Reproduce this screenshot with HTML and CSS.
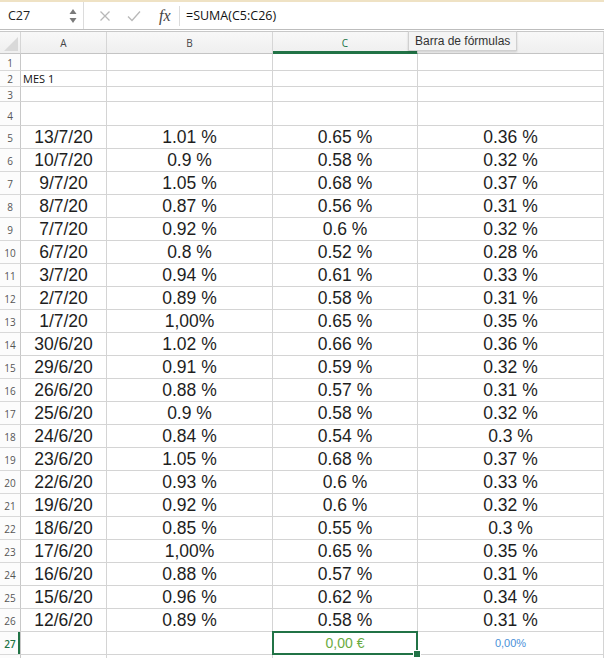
FILE: index.html
```html
<!DOCTYPE html>
<html lang="es">
<head>
<meta charset="utf-8">
<title>Hoja</title>
<link rel="stylesheet" href="styles.css">
</head>
<body>
<div class="app">
  <div class="topline"></div>
  <div class="fbar">
    <div class="namebox">
      <span class="ref">C27</span>
      <svg class="spin" width="8" height="16" viewBox="0 0 8 16"><path d="M4 1 L7.5 6 L0.5 6 Z" fill="#7a7a7a"/><path d="M4 15 L7.5 10 L0.5 10 Z" fill="#7a7a7a"/></svg>
    </div>
    <div class="sep"></div>
    <div class="btns">
      <svg class="ico" width="12" height="12" viewBox="0 0 12 12"><path d="M1.5 1.5 L10.5 10.5 M10.5 1.5 L1.5 10.5" stroke="#b8b8b8" stroke-width="1.3" fill="none"/></svg>
      <svg class="ico" width="14" height="12" viewBox="0 0 14 12"><path d="M1 6.5 L5 10.5 L13 1.5" stroke="#b8b8b8" stroke-width="1.3" fill="none"/></svg>
      <span class="fx">fx</span>
    </div>
    <div class="sep short"></div>
    <div class="formula">=SUMA(C5:C26)</div>
  </div>
  <div class="sheet">
    <div class="corner"></div><div class="ch">A</div><div class="ch">B</div><div class="ch active">C</div><div class="ch"></div>
    <div class="rh">1</div><div class="c"></div><div class="c"></div><div class="c"></div><div class="c"></div>
    <div class="rh">2</div><div class="c small">MES 1</div><div class="c"></div><div class="c"></div><div class="c"></div>
    <div class="rh">3</div><div class="c"></div><div class="c"></div><div class="c"></div><div class="c"></div>
    <div class="rh low">4</div><div class="c"></div><div class="c"></div><div class="c"></div><div class="c"></div>
    <div class="rh">5</div><div class="c n">13/7/20</div><div class="c n">1.01 %</div><div class="c n">0.65 %</div><div class="c n">0.36 %</div>
    <div class="rh">6</div><div class="c n">10/7/20</div><div class="c n">0.9 %</div><div class="c n">0.58 %</div><div class="c n">0.32 %</div>
    <div class="rh">7</div><div class="c n">9/7/20</div><div class="c n">1.05 %</div><div class="c n">0.68 %</div><div class="c n">0.37 %</div>
    <div class="rh">8</div><div class="c n">8/7/20</div><div class="c n">0.87 %</div><div class="c n">0.56 %</div><div class="c n">0.31 %</div>
    <div class="rh">9</div><div class="c n">7/7/20</div><div class="c n">0.92 %</div><div class="c n">0.6 %</div><div class="c n">0.32 %</div>
    <div class="rh">10</div><div class="c n">6/7/20</div><div class="c n">0.8 %</div><div class="c n">0.52 %</div><div class="c n">0.28 %</div>
    <div class="rh">11</div><div class="c n">3/7/20</div><div class="c n">0.94 %</div><div class="c n">0.61 %</div><div class="c n">0.33 %</div>
    <div class="rh">12</div><div class="c n">2/7/20</div><div class="c n">0.89 %</div><div class="c n">0.58 %</div><div class="c n">0.31 %</div>
    <div class="rh">13</div><div class="c n">1/7/20</div><div class="c n">1,00%</div><div class="c n">0.65 %</div><div class="c n">0.35 %</div>
    <div class="rh">14</div><div class="c n">30/6/20</div><div class="c n">1.02 %</div><div class="c n">0.66 %</div><div class="c n">0.36 %</div>
    <div class="rh">15</div><div class="c n">29/6/20</div><div class="c n">0.91 %</div><div class="c n">0.59 %</div><div class="c n">0.32 %</div>
    <div class="rh">16</div><div class="c n">26/6/20</div><div class="c n">0.88 %</div><div class="c n">0.57 %</div><div class="c n">0.31 %</div>
    <div class="rh">17</div><div class="c n">25/6/20</div><div class="c n">0.9 %</div><div class="c n">0.58 %</div><div class="c n">0.32 %</div>
    <div class="rh">18</div><div class="c n">24/6/20</div><div class="c n">0.84 %</div><div class="c n">0.54 %</div><div class="c n">0.3 %</div>
    <div class="rh">19</div><div class="c n">23/6/20</div><div class="c n">1.05 %</div><div class="c n">0.68 %</div><div class="c n">0.37 %</div>
    <div class="rh">20</div><div class="c n">22/6/20</div><div class="c n">0.93 %</div><div class="c n">0.6 %</div><div class="c n">0.33 %</div>
    <div class="rh">21</div><div class="c n">19/6/20</div><div class="c n">0.92 %</div><div class="c n">0.6 %</div><div class="c n">0.32 %</div>
    <div class="rh">22</div><div class="c n">18/6/20</div><div class="c n">0.85 %</div><div class="c n">0.55 %</div><div class="c n">0.3 %</div>
    <div class="rh">23</div><div class="c n">17/6/20</div><div class="c n">1,00%</div><div class="c n">0.65 %</div><div class="c n">0.35 %</div>
    <div class="rh">24</div><div class="c n">16/6/20</div><div class="c n">0.88 %</div><div class="c n">0.57 %</div><div class="c n">0.31 %</div>
    <div class="rh">25</div><div class="c n">15/6/20</div><div class="c n">0.96 %</div><div class="c n">0.62 %</div><div class="c n">0.34 %</div>
    <div class="rh">26</div><div class="c n">12/6/20</div><div class="c n">0.89 %</div><div class="c n">0.58 %</div><div class="c n">0.31 %</div>
    <div class="rh active">27</div><div class="c"></div><div class="c"></div><div class="c sel eur">0,00 €</div><div class="c pct">0,00%</div>
    <div class="rh"></div><div class="c"></div><div class="c"></div><div class="c"></div><div class="c"></div>
  </div>
  <div class="tooltip">Barra de fórmulas</div>
</div>
</body>
</html>
```

FILE: styles.css
```css
* { box-sizing: border-box; }
html, body { margin: 0; padding: 0; background: #fff; }
body { width: 604px; height: 658px; overflow: hidden; }

.app { position: relative; width: 604px; height: 658px; overflow: hidden; background: #fff; }

.topline { height: 2px; background: #efe2c4; }

.fbar {
  height: 28px;
  display: flex;
  align-items: center;
  border-bottom: 1px solid #bdbdbd;
  font-family: "Open Sans", "Liberation Sans", sans-serif;
}
.namebox {
  width: 83px;
  display: flex;
  align-items: center;
  justify-content: space-between;
  padding: 0 6px 0 8px;
}
.ref { font-size: 12.5px; color: #222; }
.spin { display: block; }
.sep { width: 1px; height: 27px; background: #dcdcdc; }
.sep.short { height: 20px; }
.btns {
  width: 95px;
  display: flex;
  align-items: center;
  padding-left: 15px;
  gap: 16px;
}
.ico { display: block; }
.fx {
  font-family: "Liberation Serif", serif;
  font-style: italic;
  font-size: 16px;
  color: #444;
  margin-left: 2px;
}
.formula { padding-left: 6px; font-size: 12.5px; color: #111; }

.sheet {
  margin-top: 1px;
  border-top: 1px solid #c8c8c8;
  display: grid;
  grid-template-columns: 21px 86px 166px 145px 186px;
  grid-template-rows: 22px 17px 16px 15px 24px repeat(23, 23px) 20px;
}
.corner, .ch {
  background: linear-gradient(#f8f8f8, #efefef);
  border-right: 1px solid #d6d6d6;
  border-bottom: 1px solid #c4c4c4;
}
.corner { position: relative; }
.corner::after {
  content: "";
  position: absolute;
  right: 2px; bottom: 2px;
  width: 0; height: 0;
  border-left: 14px solid transparent;
  border-bottom: 14px solid #d9d9d9;
}
.ch {
  display: flex; align-items: center; justify-content: center;
  font-family: "Open Sans", "Liberation Sans", sans-serif;
  font-size: 10px; color: #444;
}
.ch.active { color: #217346; box-shadow: inset 0 -2px 0 #217346; border-bottom-color: #217346; }

.rh {
  display: flex; align-items: center; justify-content: center;
  font-family: "Open Sans", "Liberation Sans", sans-serif;
  font-size: 10px; color: #555;
  background: #fcfcfc;
  border-right: 1px solid #c8c8c8;
  border-bottom: 1px solid #d9d9d9;
  padding-top: 1px;
}
.rh.low { align-items: flex-end; padding-bottom: 2px; }
.rh.active { color: #217346; font-weight: 600; box-shadow: inset -2px 0 0 #217346; }

.c {
  border-right: 1px solid #d4d4d4;
  border-bottom: 1px solid #d4d4d4;
  display: flex; align-items: center; justify-content: center;
  white-space: nowrap;
  overflow: visible;
}
.c.small {
  justify-content: flex-start;
  padding-left: 2px;
  font-family: "Open Sans", "Liberation Sans", sans-serif;
  font-size: 11px; color: #111;
}
.c.n {
  font-family: "Liberation Sans", Arial, sans-serif;
  font-size: 17.5px;
  color: #1e1e1e;
  padding-top: 1px;
}
.c.eur {
  font-family: "Liberation Sans", Arial, sans-serif;
  font-size: 14px;
  color: #6aab3f;
}
.c.pct {
  font-family: "Liberation Sans", Arial, sans-serif;
  font-size: 11px;
  color: #4a90d9;
}
.sel { position: relative; }
.sel::after {
  content: "";
  position: absolute;
  left: -1px; top: -1px; right: -1px; bottom: -1px;
  border: 2px solid #217346;
}
.sel::before {
  content: "";
  position: absolute;
  right: -4px; bottom: -4px;
  width: 6px; height: 6px;
  background: #217346;
  border: 1px solid #fff;
  z-index: 2;
}

.tooltip {
  position: absolute;
  left: 408px; top: 31px;
  height: 20px;
  padding: 0 6px;
  display: flex; align-items: center;
  background: #f4f4f4;
  border: 1px solid #d0d0d0;
  box-shadow: 0 1px 2px rgba(0,0,0,0.15);
  font-family: "Liberation Sans", Arial, sans-serif;
  font-size: 12px;
  color: #333;
}
```
